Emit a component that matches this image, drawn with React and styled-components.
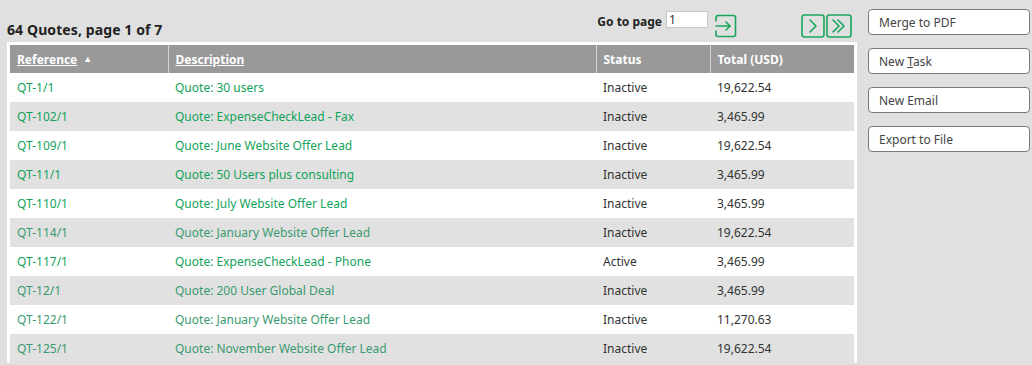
import React from "react";
import styled, { createGlobalStyle } from "styled-components";

const Global = createGlobalStyle`
  html, body { margin: 0; padding: 0; background: #e0e0e0; }
  body { font-family: "Noto Sans", "Open Sans", sans-serif; color: #333; }
`;

const Page = styled.div`
  display: flex;
  align-items: flex-start;
  padding-left: 7px;
  gap: 11px;
  width: 1032px;
  height: 365px;
  box-sizing: border-box;
  overflow: hidden;
`;

const Main = styled.div`
  width: 850px;
  display: flex;
  flex-direction: column;
`;

const TopBar = styled.div`
  height: 42px;
  display: flex;
  align-items: flex-start;
  justify-content: space-between;
`;

const Title = styled.h1`
  margin: 22px 0 0 0;
  font-size: 14px;
  font-weight: 700;
  letter-spacing: 0.1px;
  color: #222;
  line-height: 16px;
`;

const Pager = styled.div`
  display: flex;
  align-items: flex-start;
  margin-top: 11px;
  margin-right: 5px;
`;

const GoLabel = styled.label`
  font-size: 12px;
  font-weight: 700;
  color: #222;
  margin-top: 2px;
  margin-right: 4px;
`;

const PageInput = styled.input`
  width: 42px;
  height: 17px;
  box-sizing: border-box;
  border: 1px solid #c8c8c8;
  background: #fff;
  font: 12px "Noto Sans", sans-serif;
  color: #333;
  padding: 0 2px;
  outline: none;
`;

const IconButton = styled.button`
  width: ${(p) => p.$w || 24}px;
  height: 24px;
  padding: 0;
  margin: 3px 0 0 ${(p) => p.$gap || 0}px;
  border: none;
  background: transparent;
  display: flex;
  cursor: pointer;
`;

const TableWrap = styled.div`
  background: #fff;
  padding: 3px 3px 0 3px;
`;

const Table = styled.table`
  width: 100%;
  border-collapse: collapse;
  table-layout: fixed;
  font-size: 12px;
`;

const Th = styled.th`
  background: #999;
  color: #fff;
  font-weight: 700;
  text-align: left;
  height: 28px;
  padding: 0 7px;
  border-left: ${(p) => (p.$first ? "none" : "1px solid #d4d4d4")};
  white-space: nowrap;
`;

const SortLabel = styled.span`
  text-decoration: underline;
`;

const SortArrow = styled.span`
  display: inline-block;
  font-size: 9px;
  margin-left: 6px;
  vertical-align: 2px;
`;

const Tr = styled.tr`
  background: ${(p) => (p.$alt ? "#e1e1e1" : "#fff")};
`;

const Td = styled.td`
  height: 29px;
  padding: 0 7px;
  white-space: nowrap;
  color: ${(p) => (p.$link ? (p.$muted ? "#3a9b70" : "#12a35a") : "#333")};
`;

const Side = styled.div`
  display: flex;
  flex-direction: column;
  gap: 13px;
  margin-top: 9px;
  width: 162px;
`;

const ActionButton = styled.button`
  height: 26px;
  box-sizing: border-box;
  border: 1px solid #7a7a7a;
  border-radius: 4px;
  background: #fff;
  text-align: left;
  padding: 0 10px;
  font: 12px "Noto Sans", sans-serif;
  color: #444;
  cursor: pointer;
`;

const U = styled.span`
  text-decoration: underline;
`;

const GoIcon = () => (
  <svg width="24" height="24" viewBox="0 0 24 24" fill="none" stroke="#17a65b" strokeWidth="1.6" strokeLinecap="round" strokeLinejoin="round">
    <path d="M5 1.5 H20.5 A2 2 0 0 1 22.5 3.5 V20.5 A2 2 0 0 1 20.5 22.5 H5 A2 2 0 0 1 3 20.5 V17" />
    <path d="M3 7 V3.5 A2 2 0 0 1 5 1.5" />
    <path d="M3 12 H17" />
    <path d="M13 8 L17 12 L13 16" />
  </svg>
);

const NextIcon = () => (
  <svg width="24" height="24" viewBox="0 0 24 24" fill="none" stroke="#17a65b" strokeWidth="1.6" strokeLinecap="round" strokeLinejoin="round">
    <rect x="1" y="1" width="22" height="22" rx="2.5" />
    <path d="M9 6 L15 12 L9 18" />
  </svg>
);

const LastIcon = () => (
  <svg width="26" height="24" viewBox="0 0 26 24" fill="none" stroke="#17a65b" strokeWidth="1.6" strokeLinecap="round" strokeLinejoin="round">
    <rect x="1" y="1" width="24" height="22" rx="2.5" />
    <path d="M7 6 L13 12 L7 18" />
    <path d="M12 6 L18 12 L12 18" />
  </svg>
);

const rows = [
  ["QT-1/1", "Quote: 30 users", "Inactive", "19,622.54", false],
  ["QT-102/1", "Quote: ExpenseCheckLead - Fax", "Inactive", "3,465.99", false],
  ["QT-109/1", "Quote: June Website Offer Lead", "Inactive", "19,622.54", false],
  ["QT-11/1", "Quote: 50 Users plus consulting", "Inactive", "3,465.99", false],
  ["QT-110/1", "Quote: July Website Offer Lead", "Inactive", "3,465.99", false],
  ["QT-114/1", "Quote: January Website Offer Lead", "Inactive", "19,622.54", true],
  ["QT-117/1", "Quote: ExpenseCheckLead - Phone", "Active", "3,465.99", false],
  ["QT-12/1", "Quote: 200 User Global Deal", "Inactive", "3,465.99", true],
  ["QT-122/1", "Quote: January Website Offer Lead", "Inactive", "11,270.63", true],
  ["QT-125/1", "Quote: November Website Offer Lead", "Inactive", "19,622.54", true],
];

export default function App() {
  return (
    <>
      <Global />
      <Page>
        <Main>
          <TopBar>
            <Title>64 Quotes, page 1 of 7</Title>
            <Pager>
              <GoLabel htmlFor="gotopage">Go to page</GoLabel>
              <PageInput id="gotopage" defaultValue="1" />
              <IconButton $gap={5} aria-label="Go"><GoIcon /></IconButton>
              <IconButton $gap={64} aria-label="Next"><NextIcon /></IconButton>
              <IconButton $gap={1} $w={26} aria-label="Last"><LastIcon /></IconButton>
            </Pager>
          </TopBar>
          <TableWrap>
            <Table>
              <colgroup>
                <col style={{ width: 158 }} />
                <col style={{ width: 428 }} />
                <col style={{ width: 114 }} />
                <col style={{ width: 144 }} />
              </colgroup>
              <thead>
                <tr>
                  <Th $first><SortLabel>Reference</SortLabel><SortArrow>▲</SortArrow></Th>
                  <Th><SortLabel>Description</SortLabel></Th>
                  <Th>Status</Th>
                  <Th>Total (USD)</Th>
                </tr>
              </thead>
              <tbody>
                {rows.map((r, i) => (
                  <Tr key={r[0]} $alt={i % 2 === 1}>
                    <Td $link $muted={r[4]}>{r[0]}</Td>
                    <Td $link $muted={r[4]}>{r[1]}</Td>
                    <Td>{r[2]}</Td>
                    <Td>{r[3]}</Td>
                  </Tr>
                ))}
              </tbody>
            </Table>
          </TableWrap>
        </Main>
        <Side>
          <ActionButton>Merge to PDF</ActionButton>
          <ActionButton>New <U>T</U>ask</ActionButton>
          <ActionButton>New Email</ActionButton>
          <ActionButton>Export to File</ActionButton>
        </Side>
      </Page>
    </>
  );
}
